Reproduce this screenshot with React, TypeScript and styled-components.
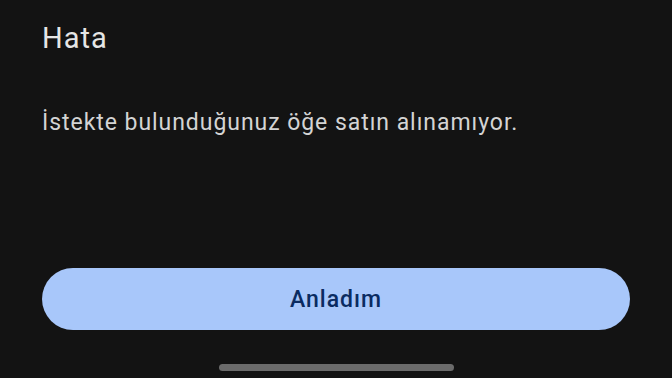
import styled, { createGlobalStyle } from "styled-components";

const GlobalStyle = createGlobalStyle`
  html, body {
    margin: 0;
    padding: 0;
    background: #131313;
  }
  * {
    box-sizing: border-box;
  }
`;

function App() {
  return (
    <>
      <GlobalStyle />
      <Screen>
        <Dialog>
          <Title>Hata</Title>
          <Message>İstekte bulunduğunuz öğe satın alınamıyor.</Message>
          <Spacer />
          <PrimaryButton>Anladım</PrimaryButton>
        </Dialog>
        <NavBar>
          <HomeHandle />
        </NavBar>
      </Screen>
    </>
  );
}

const Screen = styled.div`
  width: 672px;
  height: 378px;
  background: #131313;
  display: flex;
  flex-direction: column;
  font-family: Roboto, "Noto Sans", sans-serif;
  overflow: hidden;
`;

const Dialog = styled.div`
  flex: 1;
  display: flex;
  flex-direction: column;
  padding: 20px 42px 0 42px;
`;

const Title = styled.h1`
  margin: 0;
  font-size: 29px;
  font-weight: 400;
  line-height: 36px;
  letter-spacing: 1px;
  color: #e6e6e6;
`;

const Message = styled.p`
  margin: 53px 0 0 0;
  font-size: 23px;
  line-height: 28px;
  letter-spacing: 0.95px;
  color: #d4d4d4;
`;

const Spacer = styled.div`
  flex: 1;
`;

const PrimaryButton = styled.button`
  height: 62px;
  width: 588px;
  border: none;
  border-radius: 31px;
  background: #a8c7fa;
  color: #0a2b61;
  font-family: Roboto, "Noto Sans", sans-serif;
  font-size: 23px;
  font-weight: 500;
  letter-spacing: 1px;
  cursor: pointer;
`;

const NavBar = styled.div`
  height: 48px;
  display: flex;
  justify-content: center;
  align-items: flex-start;
  padding-top: 34px;
`;

const HomeHandle = styled.div`
  width: 235px;
  height: 7px;
  border-radius: 4px;
  background: #6b6b6b;
`;

export default App;
